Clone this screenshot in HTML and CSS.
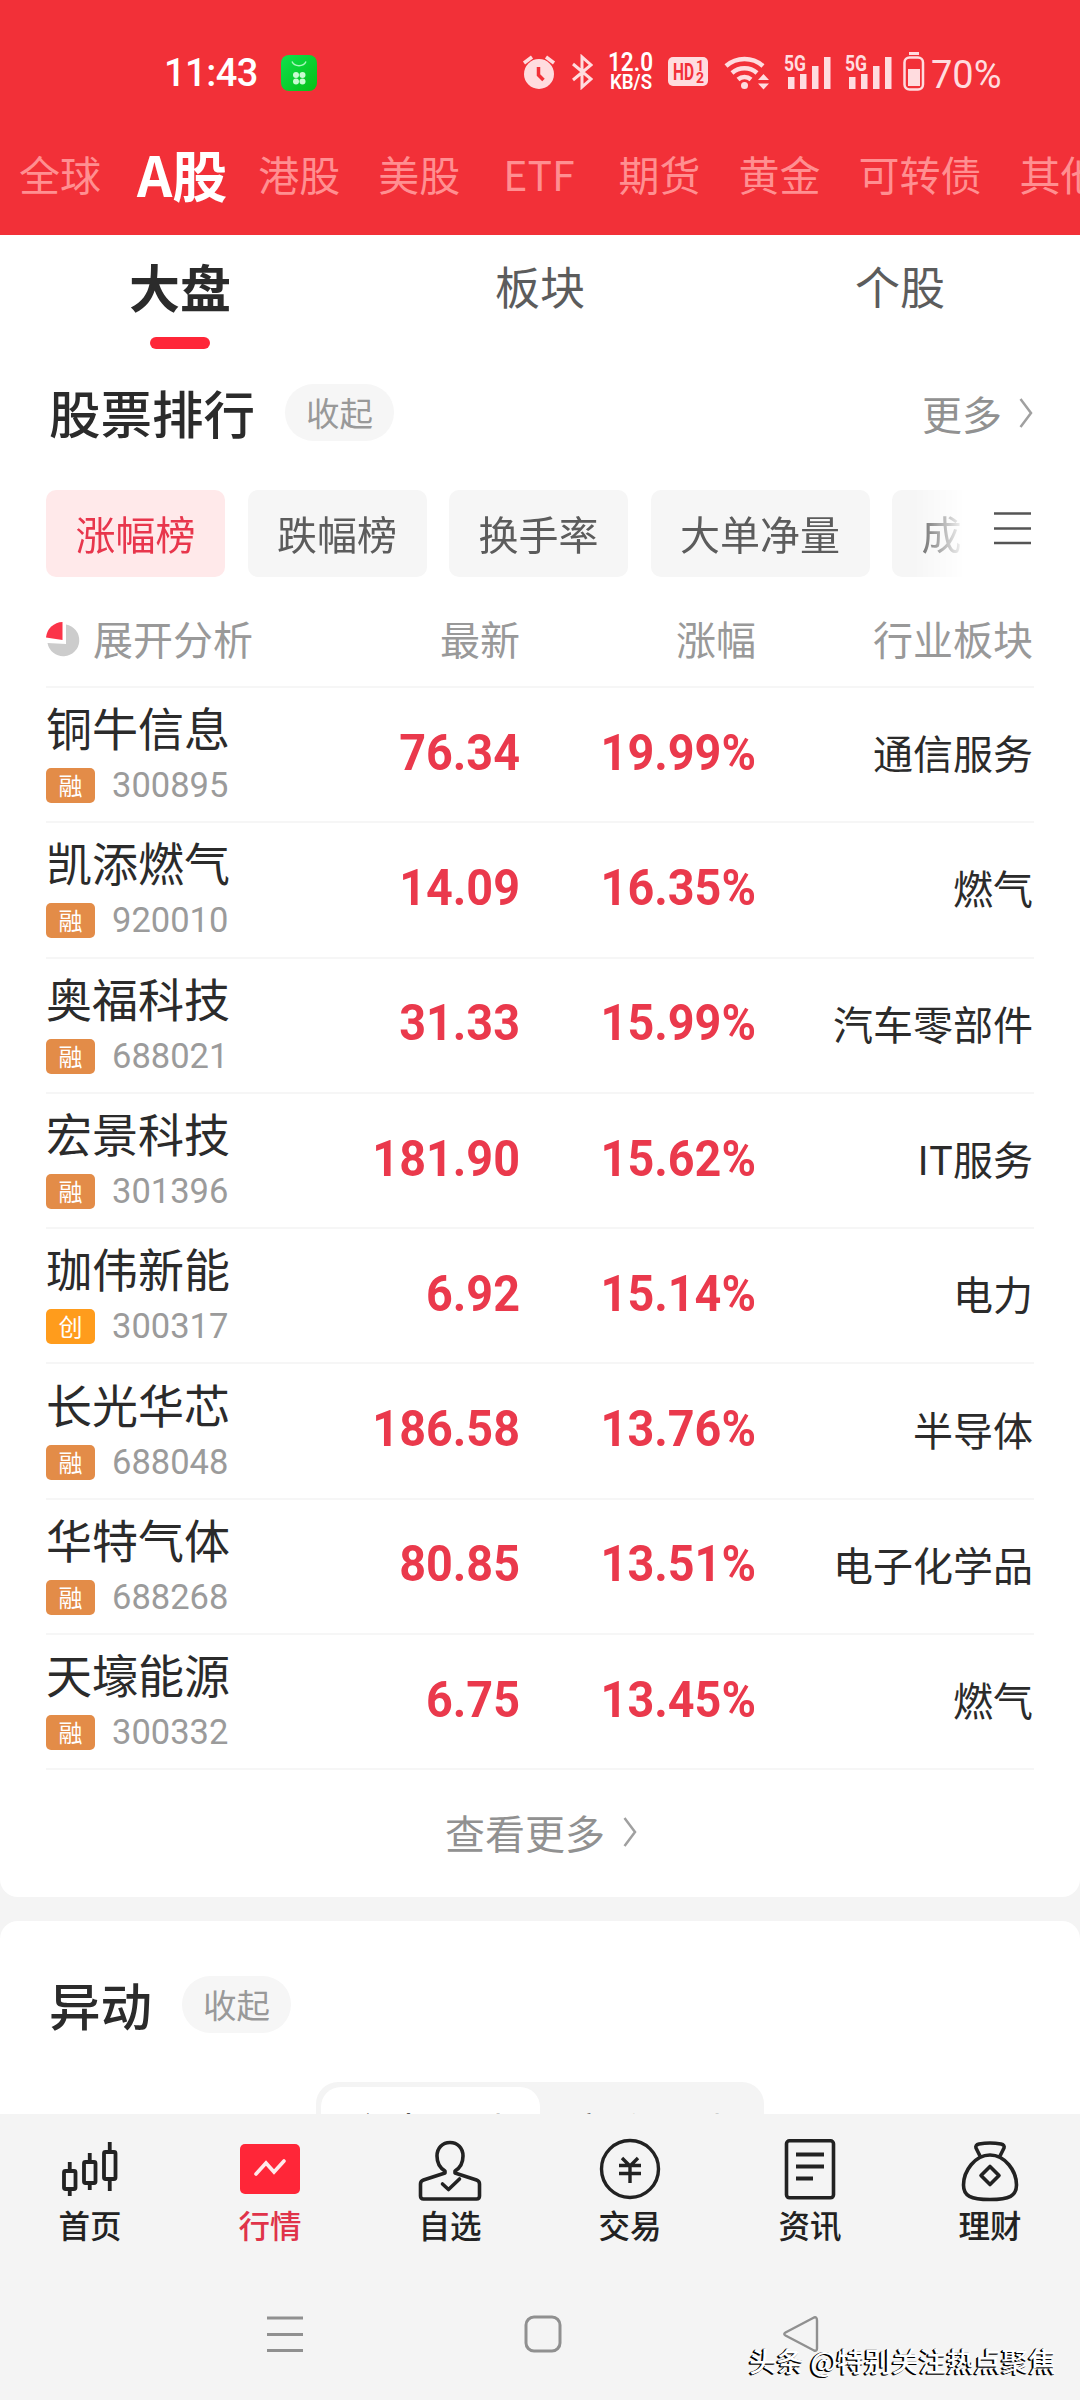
FILE: index.html
```html
<!DOCTYPE html>
<html lang="zh-CN">
<head>
    <meta charset="UTF-8">
    <meta name="viewport" content="width=device-width, initial-scale=1.0">
    <title>行情</title>
    <link rel="stylesheet" href="styles.css">
</head>
<body>
    <!-- Header -->
    <header class="header">
        <div class="status-bar">
            <span class="clock">11:43</span>
            <svg class="app-icon" width="36" height="36" viewBox="0 0 36 36">
                <defs>
                    <linearGradient id="green" x1="0" y1="0" x2="1" y2="1">
                        <stop offset="0" stop-color="#10e04c"/>
                        <stop offset="1" stop-color="#06bf16"/>
                    </linearGradient>
                </defs>
                <rect width="36" height="36" rx="8" fill="url(#green)"/>
                <path d="M11 6.500a7.500 6.500 0 0 0 14 0" fill="none" stroke="#a9f7bd" stroke-width="1.500"/>
                <g fill="#c9fbd2">
                    <circle cx="15" cy="20" r="3"/><circle cx="21.500" cy="20" r="3"/>
                    <circle cx="15" cy="26.500" r="3"/><circle cx="21.500" cy="26.500" r="3"/>
                </g>
            </svg>
            <div class="status-icons">
                <svg width="34" height="36" viewBox="0 0 34 36">
                    <circle cx="17" cy="20" r="15" fill="#ffdcdf"/>
                    <path d="M2 9l8-6M32 9l-8-6" stroke="#ffdcdf" stroke-width="3.500"/>
                    <path d="M16.500 13v8l5 5" fill="none" stroke="#f23038" stroke-width="3.500"/>
                </svg>
                <svg class="bluetooth" width="22" height="36" viewBox="0 0 22 36">
                    <path d="M2 10l18 15-9 8V3l9 8L2 26" fill="none" stroke="#ffdcdf" stroke-width="3"/>
                </svg>
                <svg class="speed" width="46" height="40" viewBox="0 0 46 40">
                    <text x="0" y="19" textLength="45" lengthAdjust="spacingAndGlyphs" font-size="25">12.0</text>
                    <text x="2" y="37" textLength="42" lengthAdjust="spacingAndGlyphs" font-size="20">KB/S</text>
                </svg>
                <svg class="hd" width="40" height="30" viewBox="0 0 40 30">
                    <rect width="40" height="29" rx="5" fill="#ffdcdf"/>
                    <text x="5" y="23" textLength="21" lengthAdjust="spacingAndGlyphs" font-size="23">HD</text>
                    <text x="28" y="14" font-size="14">1</text>
                    <text x="28" y="26" font-size="14">2</text>
                </svg>
                <svg class="wifi" width="46" height="36" viewBox="0 0 46 36">
                    <g fill="none" stroke="#ffdcdf" stroke-width="4.500">
                        <path d="M2 12a28 28 0 0 1 37 0"/>
                        <path d="M8 19a19 19 0 0 1 25 0"/>
                        <path d="M14 25.500a10 10 0 0 1 13 0"/>
                    </g>
                    <circle cx="20.500" cy="31.500" r="3.500" fill="#ffdcdf"/>
                    <path d="M34 26l5.500-6 5.500 6zM34 29.500h11l-5.500 6z" fill="#ffdcdf"/>
                </svg>
                <svg class="signal" width="47" height="36" viewBox="0 0 47 36">
                    <path d="M4 23h6.500v12H4zM16 20h6.500v15H16zM28 12h6.500v23H28zM40 3h6.500v32H40z" fill="#ffdcdf"/>
                    <text x="0" y="17" textLength="22" lengthAdjust="spacingAndGlyphs" font-size="22">5G</text>
                </svg>
                <svg class="signal" width="47" height="36" viewBox="0 0 47 36">
                    <path d="M4 23h6.500v12H4zM16 20h6.500v15H16zM28 12h6.500v23H28zM40 3h6.500v32H40z" fill="#ffdcdf"/>
                    <text x="0" y="17" textLength="22" lengthAdjust="spacingAndGlyphs" font-size="22">5G</text>
                </svg>
                <svg class="battery" width="22" height="40" viewBox="0 0 22 40">
                    <path d="M6 1.500h10" stroke="#ffdcdf" stroke-width="3"/>
                    <rect x="1.500" y="5.500" width="18.500" height="32" rx="5" fill="none" stroke="#ffdcdf" stroke-width="2.500"/>
                    <path d="M5 17h12v17H5z" fill="#ffdcdf"/>
                </svg>
                <span class="battery-level">70%</span>
            </div>
        </div>
        <nav class="market-tabs">
            <a>全球</a>
            <a class="active">A股</a>
            <a>港股</a>
            <a>美股</a>
            <a class="etf">ETF</a>
            <a>期货</a>
            <a>黄金</a>
            <a>可转债</a>
            <a>其他</a>
        </nav>
    </header>

    <main class="content">
        <!-- Stock ranking -->
        <section class="card ranking">
            <nav class="sub-tabs">
                <a class="active">大盘</a>
                <a>板块</a>
                <a>个股</a>
            </nav>

            <div class="section-title">
                <h2>股票排行</h2>
                <span class="pill">收起</span>
                <a class="more">更多
                    <svg width="14" height="32" viewBox="0 0 14 32"><path d="M1.500 2L12 16 1.500 30" fill="none" stroke="#a0a0a0" stroke-width="2.500"/></svg>
                </a>
            </div>

            <div class="filter-row">
                <div class="filters">
                    <span class="chip active">涨幅榜</span>
                    <span class="chip">跌幅榜</span>
                    <span class="chip">换手率</span>
                    <span class="chip">大单净量</span>
                    <span class="chip">成交额</span>
                </div>
                <svg width="37" height="33" viewBox="0 0 37 33"><path d="M0 1.500h37M0 16.500h37M0 31h37" stroke="#555" stroke-width="2.600"/></svg>
            </div>

            <div class="table-head">
                <span class="analysis">
                    <svg width="36" height="36" viewBox="0 0 36 36">
                        <path d="M20 2.500a16 16 0 1 1-18.500 18.500L20 22z" fill="#ccc"/>
                        <path d="M16.500 0v18L0 15.500A17 17 0 0 1 16.500 0z" fill="#fb3449"/>
                    </svg>
                    展开分析
                </span>
                <span>最新</span>
                <span>涨幅</span>
                <span>行业板块</span>
            </div>

            <div class="stock">
                <div class="stock-name">铜牛信息<p><i class="tag">融</i>300895</p></div>
                <b class="num">76.34</b><b class="num">19.99%</b><span>通信服务</span>
            </div>
            <div class="stock">
                <div class="stock-name">凯添燃气<p><i class="tag">融</i>920010</p></div>
                <b class="num">14.09</b><b class="num">16.35%</b><span>燃气</span>
            </div>
            <div class="stock">
                <div class="stock-name">奥福科技<p><i class="tag">融</i>688021</p></div>
                <b class="num">31.33</b><b class="num">15.99%</b><span>汽车零部件</span>
            </div>
            <div class="stock">
                <div class="stock-name">宏景科技<p><i class="tag">融</i>301396</p></div>
                <b class="num">181.90</b><b class="num">15.62%</b><span>IT服务</span>
            </div>
            <div class="stock">
                <div class="stock-name">珈伟新能<p><i class="tag gem">创</i>300317</p></div>
                <b class="num">6.92</b><b class="num">15.14%</b><span>电力</span>
            </div>
            <div class="stock">
                <div class="stock-name">长光华芯<p><i class="tag">融</i>688048</p></div>
                <b class="num">186.58</b><b class="num">13.76%</b><span>半导体</span>
            </div>
            <div class="stock">
                <div class="stock-name">华特气体<p><i class="tag">融</i>688268</p></div>
                <b class="num">80.85</b><b class="num">13.51%</b><span>电子化学品</span>
            </div>
            <div class="stock">
                <div class="stock-name">天壕能源<p><i class="tag">融</i>300332</p></div>
                <b class="num">6.75</b><b class="num">13.45%</b><span>燃气</span>
            </div>

            <a class="view-all">查看更多
                <svg width="14" height="32" viewBox="0 0 14 32"><path d="M1.500 2L12 16 1.500 30" fill="none" stroke="#a0a0a0" stroke-width="2.500"/></svg>
            </a>
        </section>

        <!-- Unusual moves -->
        <section class="card moves">
            <div class="section-title">
                <h2>异动</h2>
                <span class="pill">收起</span>
            </div>
            <div class="segmented">
                <span class="active">主力异动</span>
                <span>竞价异动</span>
            </div>
        </section>
    </main>

    <!-- Bottom navigation -->
    <nav class="bottom-nav">
        <a>
            <svg width="64" height="66" viewBox="0 0 64 66">
                <g fill="none" stroke="#222" stroke-width="3.800">
                    <rect x="6" y="33" width="11.500" height="18" rx="1.500"/>
                    <rect x="26" y="24" width="11.500" height="21" rx="1.500"/>
                    <rect x="46" y="14" width="11.500" height="27" rx="1.500"/>
                    <path d="M11.750 24v9M11.750 51v7M31.750 15v9M31.750 45v7M51.750 4v10M51.750 41v12"/>
                </g>
            </svg>
            首页
        </a>
        <a class="active">
            <svg width="64" height="66" viewBox="0 0 64 66">
                <rect x="2" y="6" width="60" height="50" rx="5" fill="#ff2638"/>
                <path d="M18 36l10-11 8 9 10-11" fill="none" stroke="#ffe9ea" stroke-width="3.600" stroke-linecap="round"/>
            </svg>
            行情
        </a>
        <a>
            <svg width="64" height="66" viewBox="0 0 64 66">
                <g fill="none" stroke="#222" stroke-width="3.600" stroke-linejoin="round">
                    <path d="M27 33c-5-3-8-8-8-15 0-8 5.500-13.500 13-13.500S45 10 45 18c0 7-3 12-8 15v2l21.500 7q3 1 3 4v12q0 3-3 3h-53q-3 0-3-3V46q0-3 3-4L27 35z"/>
                    <path d="M24.500 46l6 5.500L41.500 41" stroke-linecap="round"/>
                </g>
            </svg>
            自选
        </a>
        <a>
            <svg width="64" height="66" viewBox="0 0 64 66">
                <circle cx="32" cy="31" r="28.500" fill="none" stroke="#222" stroke-width="3.400"/>
                <path d="M24 20l8 8 8-8M21 27.500h22M21 35.500h22M32 28v17" fill="none" stroke="#222" stroke-width="3.400"/>
            </svg>
            交易
        </a>
        <a>
            <svg width="64" height="66" viewBox="0 0 64 66">
                <rect x="8.500" y="2.800" width="47" height="57" rx="3" fill="none" stroke="#222" stroke-width="3.600"/>
                <path d="M18 16.500h28M18 28.500h28M18 40.500h17" stroke="#222" stroke-width="3.800"/>
            </svg>
            资讯
        </a>
        <a>
            <svg width="64" height="66" viewBox="0 0 64 66">
                <g fill="none" stroke="#222" stroke-width="3.600" stroke-linejoin="round">
                    <path d="M32 17C17 17 5.500 33 5.500 47c0 11 7 14.500 26.500 14.500S58.500 58 58.500 47C58.500 33 47 17 32 17z"/>
                    <path d="M22 18l-4-8q-1-3 3-4 11-2 22 0 4 1 3 4l-4 8"/>
                    <path d="M32 28.500l9 9-9 9-9-9z"/>
                </g>
            </svg>
            理财
        </a>
    </nav>

    <!-- System navigation -->
    <footer class="system-nav">
        <svg width="38" height="38" viewBox="0 0 38 38"><path d="M1 3h36M1 19.500h36M1 35.500h36" stroke="#909090" stroke-width="3"/></svg>
        <svg width="38" height="38" viewBox="0 0 38 38"><rect x="2" y="2" width="34" height="34" rx="8" fill="none" stroke="#909090" stroke-width="3"/></svg>
        <svg width="38" height="38" viewBox="0 0 38 38"><path d="M32 2.500L3.500 17.500q-2.500 1.500 0 3L32 35.500q3 1 3-2v-28q0-4-3-3z" fill="none" stroke="#909090" stroke-width="2.400"/></svg>
        <span class="watermark">头条 @特别关注热点聚焦</span>
    </footer>
</body>
</html>
```

FILE: styles.css
```css
* {
    box-sizing: border-box;
}

body {
    margin: 0;
    height: 2400px;
    display: flex;
    flex-direction: column;
    overflow: hidden;
    background-color: #f4f4f4;
    color: #2b2b2b;
    font-family: 'Noto Sans CJK SC', sans-serif;
    font-size: 40px;
    line-height: 1;
}

svg {
    flex: none;
    display: block;
}

/* Header */
.header {
    height: 235px;
    flex: none;
    background-color: #f23038;
    color: #fff;
    overflow: hidden;
}

.status-bar {
    height: 145px;
    padding: 0 77px 0 164px;
    display: flex;
    align-items: center;
    font-family: Roboto, sans-serif;
}

.clock {
    font-size: 38px;
    font-weight: 500;
    width: 117px;
    letter-spacing: -0.5px;
}

.status-icons {
    margin-left: auto;
    display: flex;
    align-items: center;
}

.status-icons > svg {
    margin-bottom: 2px;
}

.status-icons .bluetooth {
    margin-left: 15px;
}

.status-icons .speed {
    margin-left: 15px;
    fill: #fff;
    font-weight: 600;
}

.status-icons .hd {
    margin-left: 14px;
    fill: #f23038;
    font-weight: 700;
}

.status-icons .wifi {
    margin-left: 16px;
}

.status-icons .signal {
    margin-left: 14px;
    fill: #ffdcdf;
    font-weight: 700;
}

.status-icons .battery {
    margin-left: 11px;
}

.battery-level {
    margin-left: 6px;
    width: 72px;
    padding-top: 4px;
    font-size: 38px;
    color: #ffdcdf;
}

.market-tabs {
    height: 56px;
    padding-left: 19px;
    display: flex;
    align-items: center;
    gap: 38px;
    white-space: nowrap;
    font-size: 41px;
    color: #ff8f91;
}

.market-tabs .active {
    margin: 0 -7px 0 -2px;
    font-size: 55px;
    font-weight: 700;
    color: #fff;
}

.market-tabs .etf {
    padding: 0 6px 0 5px;
}

/* Page content, cut off by the bottom navigation */
.content {
    flex: 1;
    min-height: 0;
    overflow: hidden;
    display: flex;
    flex-direction: column;
    gap: 24px;
}

.card {
    flex: none;
    background-color: #fff;
    padding: 0 46px;
}

.ranking {
    height: 1662px;
    border-radius: 0 0 18px 18px;
}

.moves {
    height: 400px;
    border-radius: 18px 18px 0 0;
    padding-top: 54px;
}

.sub-tabs {
    display: grid;
    grid-template-columns: repeat(3, 1fr);
    margin: 0 -46px;
    height: 114px;
    text-align: center;
    font-size: 45px;
    line-height: 102px;
    color: #5c5c5c;
}

.sub-tabs .active {
    font-size: 51px;
    font-weight: 700;
    color: #2b2b2b;
}

.sub-tabs .active::after {
    content: '';
    display: block;
    width: 60px;
    height: 12px;
    margin: 0 auto;
    border-radius: 6px;
    background-color: #ff2638;
}

.section-title {
    display: flex;
    align-items: center;
    height: 58px;
    padding-left: 3px;
}

.ranking .section-title {
    margin-top: 34px;
}

.section-title h2 {
    margin: 0;
    font-size: 51.5px;
    font-weight: 500;
}

.pill {
    margin-left: 30px;
    width: 109px;
    height: 57px;
    line-height: 56px;
    border-radius: 29px;
    background-color: #f6f6f6;
    text-align: center;
    font-size: 33.5px;
    color: #999;
}

.more {
    margin-left: auto;
    display: flex;
    align-items: center;
    gap: 17px;
    padding: 1px 1px 0 0;
    color: #919191;
}

.filter-row {
    display: flex;
    align-items: center;
    justify-content: space-between;
    margin-top: 49px;
    padding-right: 3px;
}

.filter-row svg {
    margin-bottom: 10px;
}

.filters {
    display: flex;
    gap: 22.5px;
    width: 916px;
    overflow: hidden;
    -webkit-mask-image: linear-gradient(to right, #000 868px, transparent 920px);
    mask-image: linear-gradient(to right, #000 868px, transparent 920px);
}

.chip {
    flex: none;
    height: 87px;
    line-height: 87px;
    padding: 0 29.5px;
    border-radius: 10px;
    background-color: #f6f6f6;
    color: #5c5c5c;
}

.chip.active {
    background-color: #ffe9ea;
    color: #e8364c;
}

/* Ranking table */
.table-head,
.stock {
    display: grid;
    grid-template-columns: 230px 244px 236px 277px;
    align-items: center;
    text-align: right;
}

.table-head {
    height: 111px;
    padding-top: 14px;
    border-bottom: 2px solid #f6f6f6;
    color: #999;
    align-items: start;
    line-height: 95px;
}

.table-head .analysis {
    display: flex;
    align-items: center;
    gap: 11px;
    white-space: nowrap;
}

.table-head .analysis svg {
    margin-top: 3px;
}

.stock {
    height: 135.3px;
    border-bottom: 2px solid #f6f6f6;
}

.stock-name {
    padding-bottom: 3px;
    text-align: left;
    font-size: 46px;
}

.stock-name p {
    display: flex;
    align-items: center;
    gap: 17px;
    margin: 19px 0 0;
    font-family: Roboto, sans-serif;
    font-size: 34.5px;
    line-height: 33px;
    color: #9b9b9b;
}

.tag {
    width: 49px;
    height: 35px;
    line-height: 34px;
    border-radius: 5px;
    background-color: #e38c48;
    color: #fff;
    font-family: 'Noto Sans CJK SC', sans-serif;
    font-size: 24px;
    font-style: normal;
    text-align: center;
}

.tag.gem {
    background-color: #ff9c1c;
}

.num {
    padding-bottom: 4px;
    font-family: Roboto, sans-serif;
    font-size: 50px;
    font-weight: 700;
    color: #ea394c;
    transform: scaleX(0.935);
    transform-origin: right;
}

.stock > span {
    padding-bottom: 5px;
    white-space: nowrap;
}

.view-all {
    display: flex;
    align-items: center;
    justify-content: center;
    gap: 18px;
    height: 123px;
    padding-left: 2px;
    color: #919191;
}

.segmented {
    display: flex;
    width: 448px;
    height: 90px;
    margin: 49px auto 0;
    padding: 5px;
    border-radius: 22px;
    background-color: #f4f4f4;
    color: #666;
}

.segmented span {
    flex: 1;
    text-align: center;
    line-height: 87px;
}

.segmented .active {
    border-radius: 20px;
    background-color: #fff;
    color: #2b2b2b;
}

/* Bottom bars */
.bottom-nav {
    flex: none;
    height: 160px;
    padding-top: 24px;
    display: grid;
    grid-template-columns: repeat(6, 1fr);
    background-color: #f4f4f4;
    font-size: 31.5px;
    font-weight: 500;
    color: #222;
}

.bottom-nav a {
    display: flex;
    flex-direction: column;
    align-items: center;
    gap: 5px;
}

.bottom-nav .active {
    color: #e0334a;
}

.system-nav {
    position: relative;
    flex: none;
    height: 126px;
    padding: 41px 260px 0 266px;
    display: flex;
    justify-content: space-between;
    background-color: #f4f4f4;
}

/* Author mark lies over the system buttons */
.watermark {
    position: absolute;
    right: 24px;
    bottom: 26px;
    font-size: 27.4px;
    font-weight: 500;
    color: #fff;
    text-shadow: -2px 1px 0 #000, -1px 1px 0 #000, -1px 0 0 #000;
    white-space: nowrap;
}
```
